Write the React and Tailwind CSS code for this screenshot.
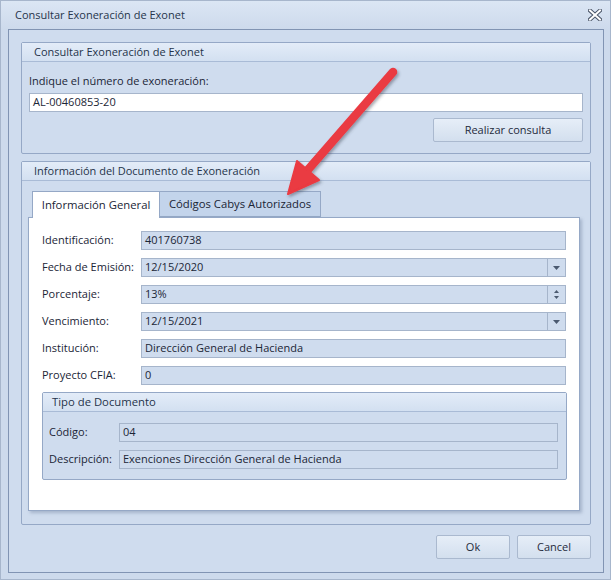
import React from "react";

const font = { fontFamily: '"Open Sans", "Noto Sans", Arial, sans-serif' };

function GroupBox({ title, className = "", children }) {
  return (
    <div className={"border border-[#95a8c6] rounded-[2px] bg-[#cfdcee] flex flex-col " + className}>
      <div className="h-[19px] flex items-center pl-[12px] bg-gradient-to-b from-[#e3ecf8] to-[#d3e0f1] border-b border-[#a9bbd6] text-[#25344a]">
        {title}
      </div>
      {children}
    </div>
  );
}

function Field({ label, value, kind, labelW = "w-[99px]" }) {
  return (
    <div className="flex items-center h-[19px]">
      <div className={labelW + " shrink-0"}>{label}</div>
      <div className="flex-1 h-[19px] border border-[#a6b5cb] bg-[#cfdcee] flex items-center">
        <div className="flex-1 pl-[3px] text-[#1b2636] truncate">{value}</div>
        {kind === "drop" && (
          <div className="w-[18px] h-full border-l border-[#a6b5cb] flex items-center justify-center">
            <svg width="7" height="4" viewBox="0 0 7 4"><path d="M0 0h7L3.5 4z" fill="#4b5a70" /></svg>
          </div>
        )}
        {kind === "spin" && (
          <div className="w-[18px] h-full border-l border-[#a6b5cb] flex flex-col items-center justify-center gap-[3px]">
            <svg width="5" height="3" viewBox="0 0 5 3"><path d="M0 3h5L2.5 0z" fill="#4b5a70" /></svg>
            <svg width="5" height="3" viewBox="0 0 5 3"><path d="M0 0h5L2.5 3z" fill="#4b5a70" /></svg>
          </div>
        )}
      </div>
    </div>
  );
}

function Btn({ children, className = "" }) {
  return (
    <div className={"h-[24px] flex items-center justify-center rounded-[2px] border border-[#aab9cf] bg-gradient-to-b from-[#e6eef8] to-[#d3dfee] text-[#1f2b3c] " + className}>
      {children}
    </div>
  );
}

export default function App() {
  return (
    <div style={font} className="relative w-[611px] h-[580px] bg-[#cddaec] border border-[#a7b6cc] text-[11px] text-[#1a2536] flex flex-col overflow-hidden">
      {/* title bar */}
      <div className="h-[28px] shrink-0 flex items-center justify-between pl-[14px] pr-[8px] bg-gradient-to-b from-[#dbe6f4] to-[#cddaec] text-[#26354b] text-[11px]">
        <span>Consultar Exoneración de Exonet</span>
        <svg width="14" height="12" viewBox="0 0 14 12">
          <path d="M2 1.5L12 10.5M12 1.5L2 10.5" stroke="#4a5568" strokeWidth="4" strokeLinecap="square" />
          <path d="M2 1.5L12 10.5M12 1.5L2 10.5" stroke="#ffffff" strokeWidth="2" strokeLinecap="square" />
        </svg>
      </div>
      {/* client frame */}
      <div className="ml-[7px] mr-[6px] h-[544px] border border-[#8194b3] bg-[#cfdcee] flex flex-col pt-[12px] pl-[12px] pr-[12px]">
        <GroupBox title="Consultar Exoneración de Exonet" className="h-[112px]">
          <div className="flex flex-col px-[7px] pt-[12px]">
            <div className="h-[14px] leading-[14px]">Indique el número de exoneración:</div>
            <div className="mt-[5px] h-[19px] bg-white border border-[#a6b5cb] flex items-center pl-[3px] text-[#1b2636]">AL-00460853-20</div>
            <div className="flex justify-end mt-[6px]">
              <Btn className="w-[150px]">Realizar consulta</Btn>
            </div>
          </div>
        </GroupBox>
        <GroupBox title="Información del Documento de Exoneración" className="mt-[7px] h-[364px]">
          <div className="flex flex-col pl-[6px] pr-[10px] pt-[10px]">
            <div className="flex h-[26px] pl-[4px]">
              <div className="w-[128px] h-[27px] bg-white border border-b-0 border-[#95a8c6] flex items-center justify-center text-[11.3px] relative z-10">
                Información General
              </div>
              <div className="w-[161px] h-[26px] bg-[#c3d4eb] border border-l-0 border-[#95a8c6] flex items-center justify-center text-[11.3px]">
                Códigos Cabys Autorizados
              </div>
            </div>
            <div className="h-[294px] bg-white border border-[#95a8c6] shadow-[2px_2px_3px_rgba(90,110,140,0.35)] flex flex-col px-[13px] pt-[13px] gap-[8px]">
              <Field label="Identificación:" value="401760738" />
              <Field label="Fecha de Emisión:" value="12/15/2020" kind="drop" />
              <Field label="Porcentaje:" value="13%" kind="spin" />
              <Field label="Vencimiento:" value="12/15/2021" kind="drop" />
              <Field label="Institución:" value="Dirección General de Hacienda" />
              <Field label="Proyecto CFIA:" value="0" />
              <div className="mt-[-1px] mr-[-1px] border border-[#95a8c6] rounded-[2px] bg-[#cfdcee] h-[88px] flex flex-col">
                <div className="h-[19px] flex items-center pl-[9px] bg-gradient-to-b from-[#e3ecf8] to-[#d3e0f1] border-b border-[#a9bbd6] text-[#25344a] text-[11.3px]">
                  Tipo de Documento
                </div>
                <div className="flex flex-col pl-[6px] pr-[8px] pt-[11px] gap-[8px]">
                  <Field label="Código:" value="04" labelW="w-[70px]" />
                  <Field label="Descripción:" value="Exenciones Dirección General de Hacienda" labelW="w-[70px]" />
                </div>
              </div>
            </div>
          </div>
        </GroupBox>
        <div className="flex justify-end gap-[7px] mt-[10px]">
          <Btn className="w-[74px]">Ok</Btn>
          <Btn className="w-[74px]">Cancel</Btn>
        </div>
      </div>
      {/* arrow annotation */}
      <svg className="absolute left-0 top-0 pointer-events-none" width="611" height="580" viewBox="0 0 611 580">
        <defs>
          <filter id="sh" x="-20%" y="-20%" width="140%" height="140%">
            <feDropShadow dx="1.5" dy="2" stdDeviation="1.8" floodColor="#3a4250" floodOpacity="0.45" />
          </filter>
        </defs>
        <g filter="url(#sh)" fill="#ea3a42" stroke="#ea3a42">
          <line x1="392" y1="71" x2="305" y2="171" strokeWidth="8.5" strokeLinecap="round" />
          <path d="M287 193 L296 160 L318 179 Z" strokeWidth="2" strokeLinejoin="round" />
        </g>
      </svg>
    </div>
  );
}
